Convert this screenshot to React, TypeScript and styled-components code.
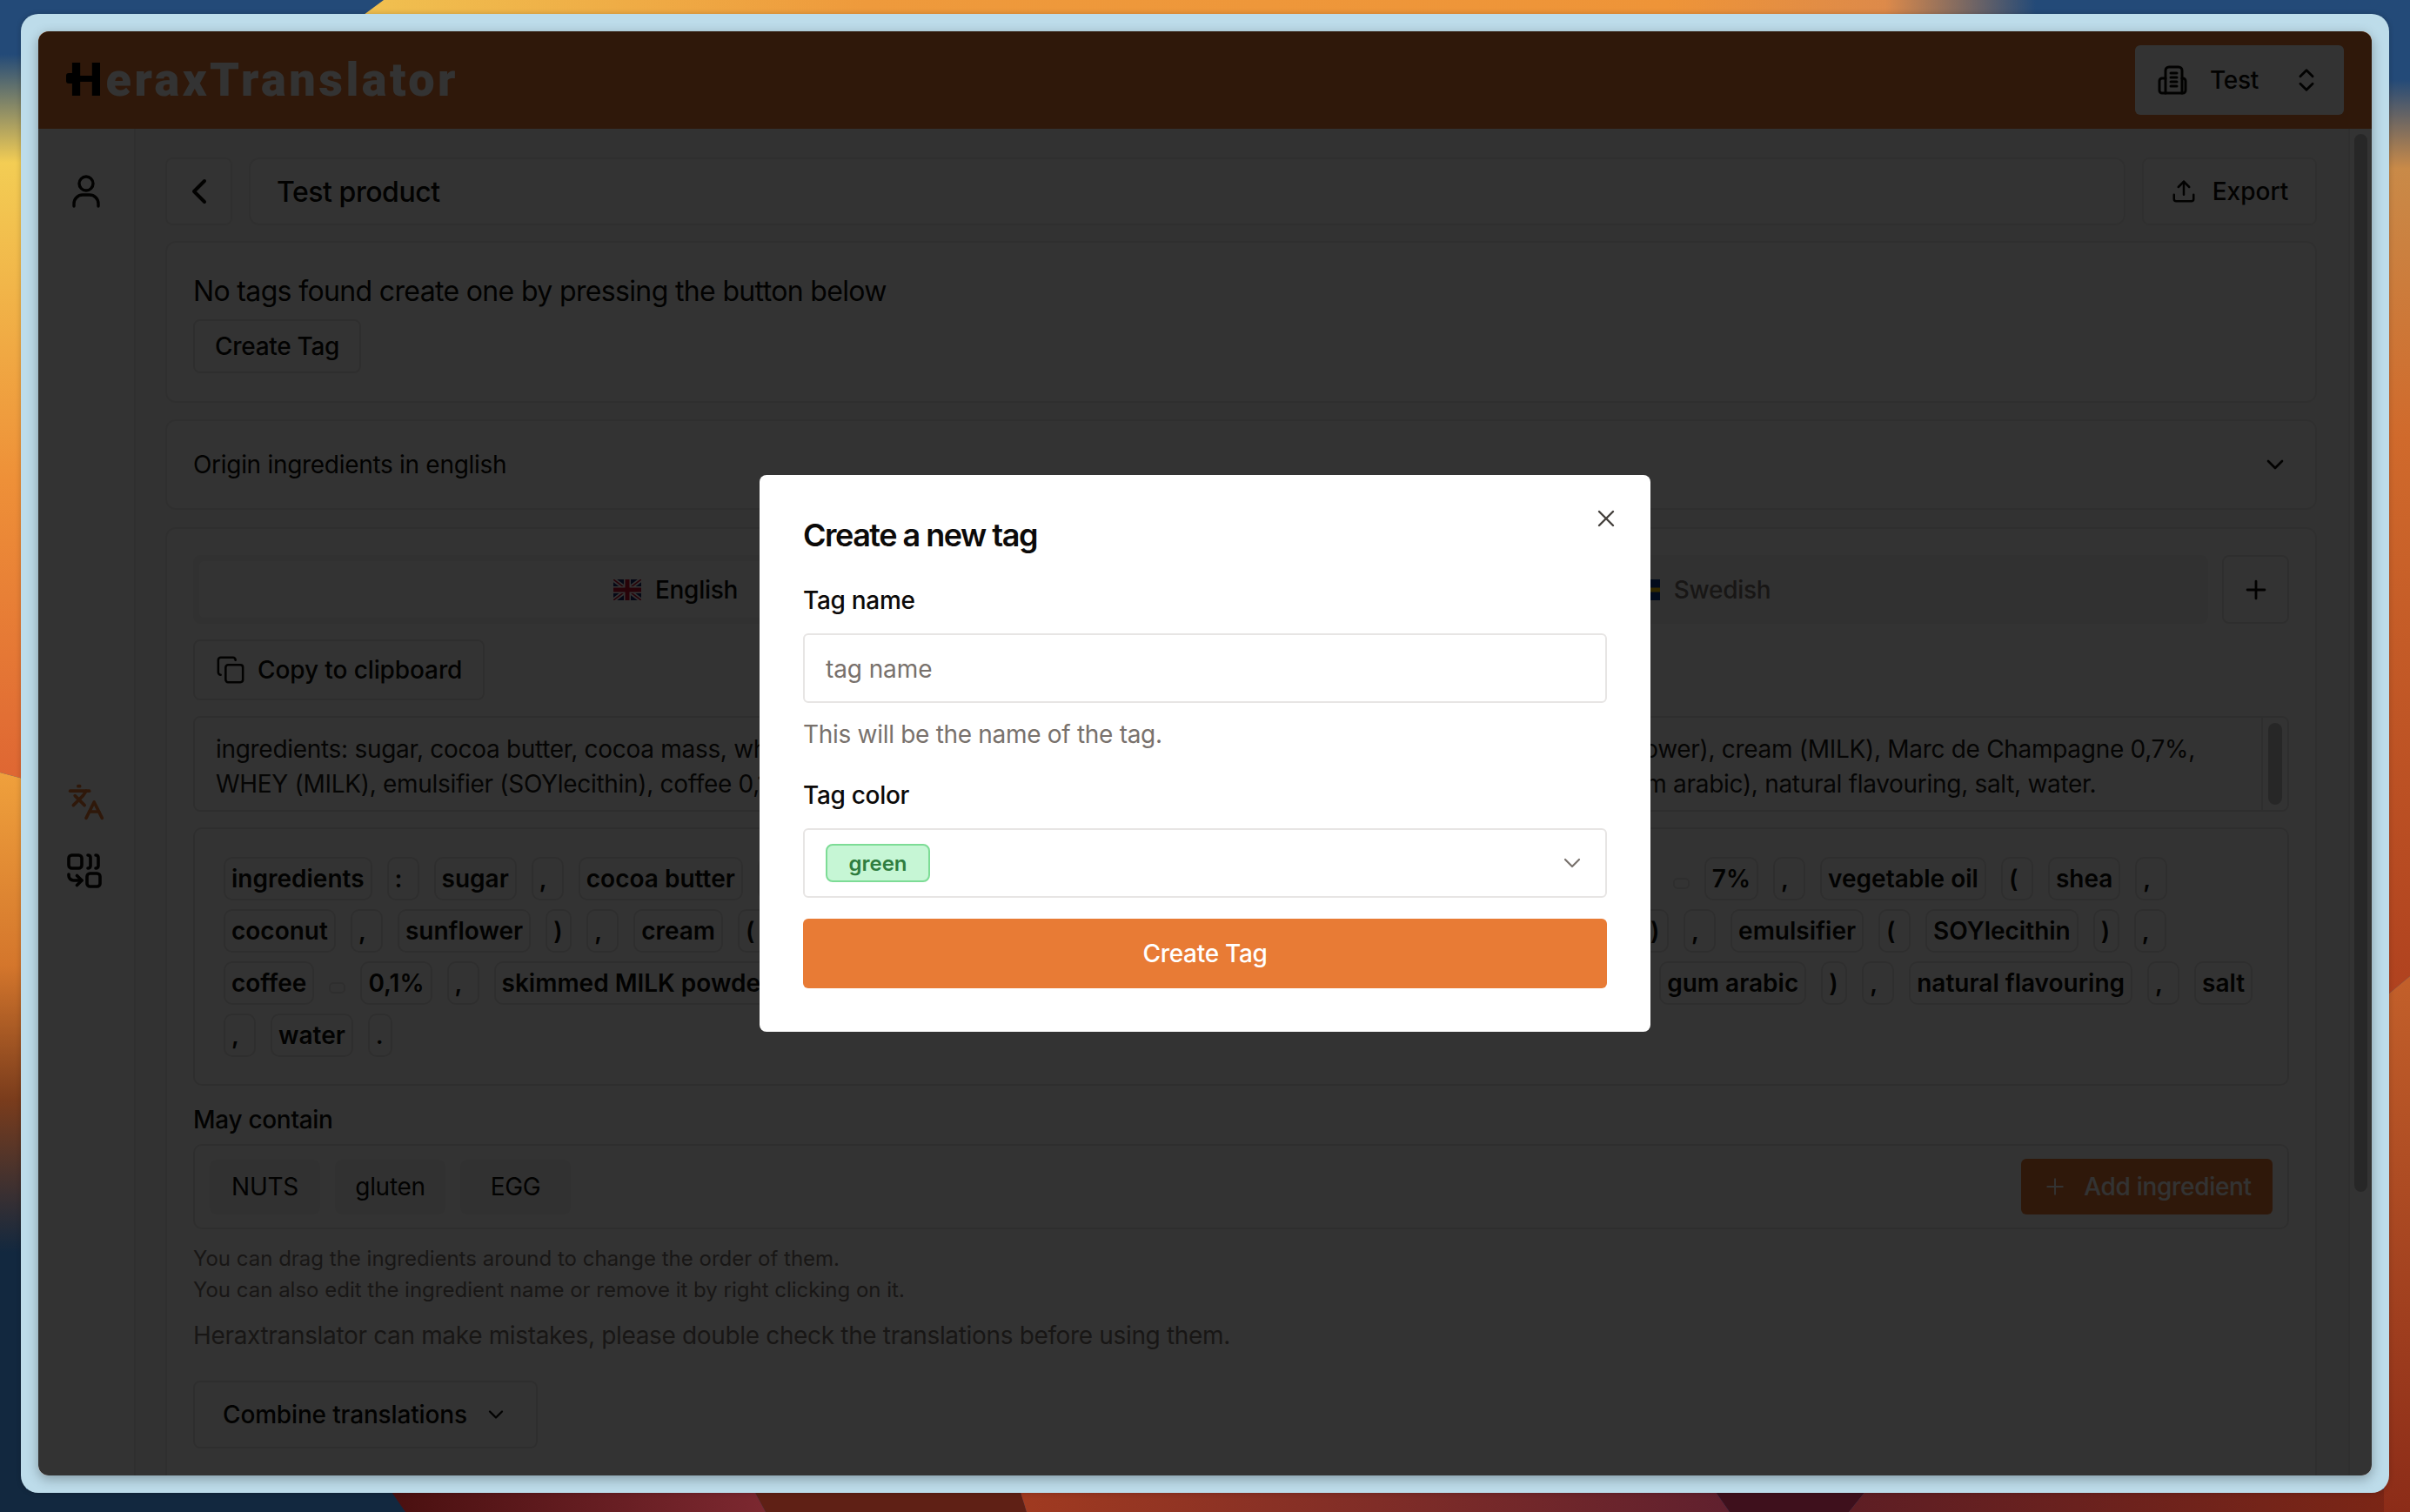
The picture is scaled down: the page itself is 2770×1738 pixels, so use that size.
import React from 'react';
import styled, { createGlobalStyle } from 'styled-components';
import { ChevronDown, ChevronLeft, ChevronsUpDown, Copy, Languages, Plus, Upload, X } from 'lucide-react';

const GlobalStyle = createGlobalStyle`
  html, body {
    margin: 0;
    padding: 0;
    background: #234a78;
  }

  * {
    box-sizing: border-box;
  }

  body {
    font-family: Inter, 'Liberation Sans', sans-serif;
    color: #0c0a09;
    font-size: 28px;
    letter-spacing: -0.3px;
  }
`;

interface TokenData {
  text: string;
  min?: number;
  empty?: boolean;
}

const t = (text: string): TokenData => {
  if (text === ',' || text === ':') return { text, min: 37 };
  if (text === '.') return { text, min: 28 };
  if (text === '(') return { text, min: 37 };
  if (text === ')') return { text, min: 30 };
  if (text === '') return { text, empty: true };
  return { text };
};

const rows: { left: string[]; hidden?: string[]; gap?: number; right?: string[] }[] = [
  {
    left: ['ingredients', ':', 'sugar', ',', 'cocoa butter'],
    hidden: [',', 'cocoa mass', ',', 'whole MILK powder', ',', 'hazelnuts'],
    gap: 1035,
    right: ['', '7%', ',', 'vegetable oil', '(', 'shea', ','],
  },
  {
    left: ['coconut', ',', 'sunflower', ')', ',', 'cream', '('],
    hidden: ['MILK', ')', ',', 'Marc de Champagne', '0,7%', ',', 'WHEY', '(', 'MILK'],
    gap: 969,
    right: [')', ',', 'emulsifier', '(', 'SOYlecithin', ')', ','],
  },
  {
    left: ['coffee', '', '0,1%', ',', 'skimmed MILK powder'],
    hidden: [',', 'glucose syrup', ',', 'thickener', '('],
    gap: 979,
    right: ['gum arabic', ')', ',', 'natural flavouring', ',', 'salt'],
  },
  { left: [',', 'water', '.'] },
];

const Wallpaper = () => (
  <WallpaperSvg viewBox="0 0 2770 1738" aria-hidden="true">
    <defs>
      <linearGradient id="leftTop" gradientUnits="userSpaceOnUse" x1="0" y1="0" x2="0" y2="890">
        <stop offset="0.07" stopColor="#234a78" />
        <stop offset="0.21" stopColor="#f3cd54" />
        <stop offset="0.62" stopColor="#ee9038" />
        <stop offset="1" stopColor="#df6733" />
      </linearGradient>
      <linearGradient id="leftBottom" gradientUnits="userSpaceOnUse" x1="0" y1="890" x2="0" y2="1440">
        <stop offset="0" stopColor="#efa03c" />
        <stop offset="0.4" stopColor="#d4762c" />
        <stop offset="0.68" stopColor="#7a3c1c" />
        <stop offset="1" stopColor="#12283f" />
      </linearGradient>
      <linearGradient id="rightTop" gradientUnits="userSpaceOnUse" x1="0" y1="0" x2="0" y2="1140">
        <stop offset="0.08" stopColor="#234a78" />
        <stop offset="0.17" stopColor="#c98a48" />
        <stop offset="0.44" stopColor="#d06a2c" />
        <stop offset="1" stopColor="#b0421f" />
      </linearGradient>
      <linearGradient id="rightBottom" gradientUnits="userSpaceOnUse" x1="0" y1="1130" x2="0" y2="1738">
        <stop offset="0" stopColor="#c25f2a" />
        <stop offset="1" stopColor="#8c2c18" />
      </linearGradient>
      <linearGradient id="topBand" gradientUnits="userSpaceOnUse" x1="417" y1="0" x2="2340" y2="0">
        <stop offset="0" stopColor="#f0c050" />
        <stop offset="0.3" stopColor="#ee9a3c" />
        <stop offset="0.78" stopColor="#ee9438" />
        <stop offset="0.91" stopColor="#dd8a4a" />
        <stop offset="1" stopColor="#234a78" />
      </linearGradient>
      <linearGradient id="bottomA" gradientUnits="userSpaceOnUse" x1="450" y1="0" x2="880" y2="0">
        <stop offset="0" stopColor="#4a1010" />
        <stop offset="1" stopColor="#7c2830" />
      </linearGradient>
      <linearGradient id="bottomB" gradientUnits="userSpaceOnUse" x1="1175" y1="0" x2="1985" y2="0">
        <stop offset="0" stopColor="#a03a20" />
        <stop offset="1" stopColor="#60202e" />
      </linearGradient>
      <linearGradient id="bottomC" gradientUnits="userSpaceOnUse" x1="2130" y1="0" x2="2770" y2="0">
        <stop offset="0" stopColor="#5e1e24" />
        <stop offset="1" stopColor="#7c2615" />
      </linearGradient>
    </defs>
    <rect x="0" y="0" width="2770" height="20" fill="#234a78" />
    <polygon points="441,0 2340,0 2340,20 414,20" fill="url(#topBand)" />
    <rect x="0" y="1712" width="470" height="26" fill="#12283f" />
    <polygon points="448,1712 866,1712 880,1738 466,1738" fill="url(#bottomA)" />
    <polygon points="866,1712 1172,1712 1180,1738 880,1738" fill="#5f2015" />
    <polygon points="1172,1712 1970,1712 1988,1738 1180,1738" fill="url(#bottomB)" />
    <polygon points="1970,1712 2146,1712 2125,1738 1988,1738" fill="#3e101c" />
    <polygon points="2146,1712 2770,1712 2770,1738 2125,1738" fill="url(#bottomC)" />
    <polygon points="0,0 30,0 30,896 0,888" fill="url(#leftTop)" />
    <polygon points="0,888 30,896 30,1738 0,1738" fill="url(#leftBottom)" />
    <polygon points="2740,0 2770,0 2770,1122 2740,1147" fill="url(#rightTop)" />
    <polygon points="2740,1147 2770,1122 2770,1738 2740,1738" fill="url(#rightBottom)" />
  </WallpaperSvg>
);

const BuildingIcon = () => (
  <svg width="34" height="34" viewBox="0 0 34 34" fill="none" stroke="currentColor" strokeWidth="3" strokeLinecap="round" strokeLinejoin="round">
    <path d="M9 32V6a4 4 0 0 1 4-4h11a4 4 0 0 1 4 4v26" />
    <path d="M9 15H5a3 3 0 0 0-3 3v11a3 3 0 0 0 3 3h24a3 3 0 0 0 3-3V18a3 3 0 0 0-3-3h-1" />
    <path d="M15 9h7M15 14h7M15 19h7M15 24h7" />
  </svg>
);

const PersonIcon = () => (
  <svg width="32" height="38" viewBox="0 0 32 38" fill="none" stroke="currentColor" strokeWidth="3.4" strokeLinecap="round">
    <circle cx="16" cy="10" r="8" />
    <path d="M2 36v-3a10 10 0 0 1 10-10h8a10 10 0 0 1 10 10v3" />
  </svg>
);

const CombineIcon = () => (
  <svg width="40" height="40" viewBox="0 0 40 40" fill="none" stroke="currentColor" strokeWidth="3.6" strokeLinecap="round" strokeLinejoin="round">
    <rect x="2" y="2" width="15" height="15" rx="3.5" />
    <path d="M24 2c1.8 0 3 1.2 3 3v9c0 1.8-1.2 3-3 3" />
    <path d="M33 2c1.8 0 3 1.2 3 3v9c0 1.8-1.2 3-3 3" />
    <path d="M2 24v1.5A5.5 5.5 0 0 0 7.500 31H17" />
    <path d="M11.500 25.500 17 31l-5.500 5.500" />
    <rect x="23" y="23" width="15" height="15" rx="3.5" />
  </svg>
);

const UkFlag = () => (
  <svg width="32" height="24" viewBox="0 0 32 24">
    <rect width="32" height="24" fill="#1a2a6c" />
    <path d="M0 0l32 24M32 0L0 24" stroke="#fff" strokeWidth="5" />
    <path d="M0 0l32 24M32 0L0 24" stroke="#c8102e" strokeWidth="1.6" />
    <path d="M16 0v24M0 12h32" stroke="#fff" strokeWidth="8" />
    <path d="M16 0v24M0 12h32" stroke="#c8102e" strokeWidth="5" />
  </svg>
);

const SeFlag = () => (
  <svg width="32" height="24" viewBox="0 0 32 24">
    <rect width="32" height="24" fill="#0b3a8a" />
    <path d="M11 0v24M0 12h32" stroke="#fecb00" strokeWidth="5" />
  </svg>
);

const TokenChip = ({ token }: { token: TokenData }) => (
  <Token $min={token.min} $empty={token.empty}>
    {token.text}
  </Token>
);

const App: React.FC = () => {
  return (
    <Desktop>
      <GlobalStyle />
      <Wallpaper />
      <Frame>
        <Window>
          <Header>
            <Logo>
              <LogoH>H</LogoH>eraxTranslator
            </Logo>
            <TenantSelect>
              <BuildingIcon />
              <TenantName>Test</TenantName>
              <ChevronsUpDown size={34} strokeWidth={2} />
            </TenantSelect>
          </Header>
          <Body>
            <Sidebar>
              <SideTop>
                <PersonIcon />
              </SideTop>
              <SideBottom>
                <TranslateIcon>
                  <Languages size={44} />
                </TranslateIcon>
                <CombineIcon />
              </SideBottom>
            </Sidebar>
            <Main>
              <TitleRow>
                <BackButton>
                  <ChevronLeft size={48} />
                </BackButton>
                <TitleBox>Test product</TitleBox>
                <ExportButton>
                  <Upload size={30} />
                  Export
                </ExportButton>
              </TitleRow>
              <TagsCard>
                <TagsText>No tags found create one by pressing the button below</TagsText>
                <OutlineButton>Create Tag</OutlineButton>
              </TagsCard>
              <OriginCard>
                Origin ingredients in english
                <ChevronDown size={32} />
              </OriginCard>
              <TranslationCard>
                <TabRow>
                  <TabList>
                    <Tab $active $shift={84}>
                      <UkFlag />
                      English
                    </Tab>
                    <Tab $shift={28}>
                      <SeFlag />
                      Swedish
                    </Tab>
                  </TabList>
                  <PlusButton>
                    <Plus size={34} />
                  </PlusButton>
                </TabRow>
                <CopyButton>
                  <Copy size={34} strokeWidth={1.8} />
                  Copy to clipboard
                </CopyButton>
                <TextBox>
                  <TextLines>
                    ingredients: sugar, cocoa butter, cocoa mass, whole MILK powder, glucose, hazelnut oil 7%, vegetable oil (shea, coconut, sunflower), cream (MILK), Marc de Champagne 0,7%,
                    <br />
                    WHEY (MILK), emulsifier (SOYlecithin), coffee 0,1%, skimmed MILK powder, glucose syrup, invert sugars, stabilising agents (gum arabic), natural flavouring, salt, water.
                  </TextLines>
                  <TextScroll>
                    <TextThumb />
                  </TextScroll>
                </TextBox>
                <TokenBox>
                  {rows.map((row, i) => (
                    <TokenRow key={i}>
                      {row.left.map((text, j) => (
                        <TokenChip key={j} token={t(text)} />
                      ))}
                      {row.hidden && (
                        <HiddenRun $width={row.gap || 0}>
                          {row.hidden.map((text, j) => (
                            <TokenChip key={j} token={t(text)} />
                          ))}
                        </HiddenRun>
                      )}
                      {row.right &&
                        row.right.map((text, j) => <TokenChip key={j} token={t(text)} />)}
                    </TokenRow>
                  ))}
                </TokenBox>
                <SectionLabel>May contain</SectionLabel>
                <MayContainBox>
                  <AllergenList>
                    <Allergen>NUTS</Allergen>
                    <Allergen>gluten</Allergen>
                    <Allergen>EGG</Allergen>
                  </AllergenList>
                  <AddButton>
                    <Plus size={30} strokeWidth={1.5} />
                    Add ingredient
                  </AddButton>
                </MayContainBox>
                <HelpText>
                  You can drag the ingredients around to change the order of them.
                  <br />
                  You can also edit the ingredient name or remove it by right clicking on it.
                </HelpText>
                <Warning>Heraxtranslator can make mistakes, please double check the translations before using them.</Warning>
                <CombineButton>
                  Combine translations
                  <ChevronDown size={28} />
                </CombineButton>
              </TranslationCard>
            </Main>
            <ScrollTrack>
              <ScrollThumb />
            </ScrollTrack>
          </Body>
          <Overlay>
            <Modal>
              <CloseButton>
                <X size={32} strokeWidth={1.8} />
              </CloseButton>
              <ModalTitle>Create a new tag</ModalTitle>
              <FieldLabel $top={43}>Tag name</FieldLabel>
              <TagInput placeholder="tag name" readOnly />
              <FieldHint>This will be the name of the tag.</FieldHint>
              <FieldLabel $top={36}>Tag color</FieldLabel>
              <ColorSelect>
                <GreenBadge>green</GreenBadge>
                <ChevronDown size={32} strokeWidth={1.6} />
              </ColorSelect>
              <SubmitButton>Create Tag</SubmitButton>
            </Modal>
          </Overlay>
        </Window>
      </Frame>
    </Desktop>
  );
};

export default App;

const Desktop = styled.div`
  position: relative;
  width: 2770px;
  height: 1738px;
  padding: 16px 24px 22px 24px;
  display: flex;
  overflow: hidden;
`;

const WallpaperSvg = styled.svg`
  position: absolute;
  inset: 0;
  width: 100%;
  height: 100%;
`;

const Frame = styled.div`
  position: relative;
  flex: 1;
  display: flex;
  padding: 20px;
  background: #bddcea;
  border-radius: 20px;
  box-shadow: 0 0 6px rgba(0, 0, 0, 0.2);
`;

const Window = styled.div`
  position: relative;
  flex: 1;
  display: flex;
  flex-direction: column;
  overflow: hidden;
  background: #fff;
  border-radius: 12px;
  box-shadow: 0 4px 14px rgba(0, 0, 0, 0.3);
`;

const Header = styled.header`
  flex: none;
  height: 112px;
  padding: 0 32px;
  display: flex;
  align-items: center;
  justify-content: space-between;
  background: #e87b35;
`;

const Logo = styled.div`
  margin-left: 4px;
  font-family: Roboto, Inter, sans-serif;
  font-weight: 900;
  font-size: 54px;
  letter-spacing: 3.5px;
  line-height: 1;
  color: #fff;
`;

const LogoH = styled.span`
  position: relative;
  color: #000;

  &::before {
    content: '';
    position: absolute;
    left: -4px;
    top: 24px;
    width: 10px;
    height: 12px;
    border-radius: 3px;
    background: #000;
  }
`;

const TenantSelect = styled.div`
  width: 240px;
  height: 80px;
  padding: 0 26px;
  display: flex;
  align-items: center;
  justify-content: space-between;
  background: #fff;
  border-radius: 6px;
`;

const TenantName = styled.span`
  font-weight: 500;
  flex: 1;
  padding-left: 26px;
`;

const Body = styled.div`
  flex: 1;
  display: flex;
  min-height: 0;
  background: #fafaf9;
`;

const Sidebar = styled.aside`
  flex: none;
  width: 112px;
  display: flex;
  flex-direction: column;
  align-items: center;
  background: #fff;
  border-right: 2px solid #ebeae9;
`;

const SideTop = styled.div`
  margin-top: 53px;
  display: flex;
`;

const SideBottom = styled.div`
  margin-top: 661px;
  display: flex;
  flex-direction: column;
  gap: 37px;
`;

const TranslateIcon = styled.div`
  display: flex;
  color: #e87b35;
`;

const Main = styled.main`
  flex: 1;
  min-width: 0;
  padding: 33px 36px 0 34px;
  display: flex;
  flex-direction: column;
  gap: 18px;
  overflow: hidden;
`;

const TitleRow = styled.div`
  flex: none;
  display: flex;
  gap: 19px;
  height: 78px;
`;

const Panel = styled.div`
  background: #fff;
  border: 2px solid #ebeae9;
  border-radius: 12px;
`;

const BackButton = styled(Panel)`
  width: 77px;
  display: flex;
  align-items: center;
  justify-content: center;
  border-radius: 8px;
`;

const TitleBox = styled(Panel)`
  flex: 1;
  display: flex;
  align-items: center;
  padding-left: 30px;
  font-size: 32px;
  letter-spacing: -0.45px;
  font-weight: 500;
`;

const ExportButton = styled(Panel)`
  width: 201px;
  display: flex;
  align-items: center;
  justify-content: center;
  gap: 18px;
  font-weight: 500;
  letter-spacing: 0;
  border-radius: 8px;
`;

const TagsCard = styled(Panel)`
  flex: none;
  height: 186px;
  padding: 32px 32px 32px 30px;
  display: flex;
  flex-direction: column;
  align-items: flex-start;
  gap: 8px;
`;

const TagsText = styled.div`
  font-size: 32px;
  line-height: 48px;
  letter-spacing: -0.65px;
`;

const OutlineButton = styled.div`
  height: 62px;
  padding: 0 23px;
  display: flex;
  align-items: center;
  font-weight: 500;
  border: 2px solid #e7e5e4;
  border-radius: 8px;
`;

const OriginCard = styled(Panel)`
  flex: none;
  height: 104px;
  padding: 0 30px;
  display: flex;
  align-items: center;
  justify-content: space-between;
  margin-top: 1px;
`;

const TranslationCard = styled(Panel)`
  flex: none;
  margin-top: 2px;
  padding: 30px 30px 40px;
  display: flex;
  flex-direction: column;
  align-items: stretch;
`;

const TabRow = styled.div`
  display: flex;
  gap: 16px;
  height: 79px;
`;

const TabList = styled.div`
  flex: 1;
  display: flex;
  padding: 7px;
  background: #f5f5f4;
  border-radius: 8px;
`;

const Tab = styled.div<{ $active?: boolean; $shift?: number }>`
  flex: 1;
  display: flex;
  align-items: center;
  justify-content: center;
  gap: 16px;
  padding-right: ${(p) => p.$shift || 0}px;
  font-weight: 500;
  border-radius: 6px;
  background: ${(p) => (p.$active ? '#fff' : 'transparent')};
  color: ${(p) => (p.$active ? '#0c0a09' : '#78716c')};
`;

const PlusButton = styled.div`
  width: 77px;
  display: flex;
  align-items: center;
  justify-content: center;
  border: 2px solid #e7e5e4;
  border-radius: 8px;
`;

const CopyButton = styled.div`
  align-self: flex-start;
  height: 70px;
  margin-top: 18px;
  padding: 0 24px;
  display: flex;
  align-items: center;
  gap: 14px;
  font-weight: 500;
  letter-spacing: -0.1px;
  border: 2px solid #e7e5e4;
  border-radius: 8px;
`;

const TextBox = styled.div`
  margin-top: 18px;
  height: 110px;
  display: flex;
  border: 2px solid #e7e5e4;
  border-radius: 8px;
`;

const TextLines = styled.div`
  flex: 1;
  padding: 16px 24px;
  font-size: 28px;
  line-height: 40px;
  white-space: nowrap;
  overflow: hidden;
  color: #1c1917;
`;

const TextScroll = styled.div`
  flex: none;
  width: 30px;
  padding: 6px 6px;
  border-left: 2px solid #e7e5e4;
`;

const TextThumb = styled.div`
  height: 100%;
  border-radius: 8px;
  background: #c4c4c4;
`;

const TokenBox = styled.div`
  margin-top: 18px;
  padding: 32px 33px 31px;
  display: flex;
  flex-direction: column;
  gap: 10px;
  border: 2px solid #e7e5e4;
  border-radius: 10px;
`;

const TokenRow = styled.div`
  display: flex;
  gap: 17px;
  height: 50px;
`;

const Token = styled.div<{ $min?: number; $empty?: boolean }>`
  flex: none;
  height: ${(p) => (p.$empty ? '13px' : '50px')};
  width: ${(p) => (p.$empty ? '19px' : 'auto')};
  min-width: ${(p) => p.$min || 0}px;
  margin-top: ${(p) => (p.$empty ? '24px' : '0')};
  padding: 0 7px;
  display: flex;
  align-items: center;
  font-weight: 600;
  letter-spacing: 0;
  white-space: nowrap;
  border: 2px solid #e7e5e4;
  border-radius: ${(p) => (p.$empty ? '5px' : '10px')};
`;

const HiddenRun = styled.div<{ $width: number }>`
  flex: none;
  width: ${(p) => p.$width}px;
  display: flex;
  gap: 17px;
  overflow: hidden;
`;

const SectionLabel = styled.div`
  margin-top: 25px;
  font-weight: 500;
  line-height: 28px;
`;

const MayContainBox = styled.div`
  margin-top: 14px;
  height: 98px;
  padding: 0 17px;
  display: flex;
  align-items: center;
  justify-content: space-between;
  border: 2px solid #e7e5e4;
  border-radius: 10px;
`;

const AllergenList = styled.div`
  display: flex;
  gap: 17px;
`;

const Allergen = styled.div`
  width: 127px;
  height: 63px;
  display: flex;
  align-items: center;
  justify-content: center;
  background: #f5f5f4;
  border-radius: 8px;
`;

const AddButton = styled.div`
  width: 289px;
  height: 64px;
  display: flex;
  align-items: center;
  justify-content: center;
  gap: 18px;
  font-weight: 500;
  color: #fff;
  background: #e87b35;
  border-radius: 6px;
`;

const HelpText = styled.div`
  margin-top: 16px;
  font-size: 24px;
  line-height: 36px;
  letter-spacing: 0;
  color: #78716c;
`;

const Warning = styled.div`
  margin-top: 14px;
  line-height: 40px;
  letter-spacing: -0.34px;
  color: #78716c;
`;

const CombineButton = styled.div`
  align-self: flex-start;
  width: 396px;
  height: 78px;
  margin-top: 32px;
  padding: 0 32px;
  display: flex;
  align-items: center;
  justify-content: space-between;
  font-weight: 500;
  letter-spacing: -0.15px;
  border: 2px solid #e7e5e4;
  border-radius: 8px;
`;

const ScrollTrack = styled.div`
  flex: none;
  width: 27px;
  padding: 6px 5px 0;
  background: #fff;
  border-left: 2px solid #ebeae9;
`;

const ScrollThumb = styled.div`
  height: 1216px;
  border-radius: 8px;
  background: #c4c4c4;
`;

const Overlay = styled.div`
  position: absolute;
  inset: 0;
  display: flex;
  align-items: center;
  justify-content: center;
  background: rgba(0, 0, 0, 0.8);
`;

const Modal = styled.div`
  position: relative;
  width: 1024px;
  height: 640px;
  padding: 51px 50px 0;
  display: flex;
  flex-direction: column;
  background: #fff;
  border-radius: 8px;
`;

const CloseButton = styled.div`
  position: absolute;
  top: 34px;
  right: 35px;
  display: flex;
  color: #44403c;
`;

const ModalTitle = styled.h2`
  margin: 0;
  font-size: 36px;
  line-height: 36px;
  font-weight: 600;
  letter-spacing: -1.5px;
`;

const FieldLabel = styled.label<{ $top: number }>`
  margin-top: ${(p) => p.$top}px;
  font-weight: 500;
  line-height: 28px;
`;

const TagInput = styled.input`
  margin-top: 24px;
  height: 80px;
  padding: 2px 24px 0;
  font: inherit;
  letter-spacing: -0.1px;
  border: 2px solid #e7e5e4;
  border-radius: 6px;
  outline: none;

  &::placeholder {
    color: #78716c;
  }
`;

const FieldHint = styled.div`
  margin-top: 16px;
  line-height: 40px;
  color: #78716c;
`;

const ColorSelect = styled.div`
  margin-top: 24px;
  height: 80px;
  padding: 0 22px 0 24px;
  display: flex;
  align-items: center;
  justify-content: space-between;
  border: 2px solid #e7e5e4;
  border-radius: 6px;

  svg {
    color: #78716c;
  }
`;

const GreenBadge = styled.span`
  width: 120px;
  height: 44px;
  display: flex;
  align-items: center;
  justify-content: center;
  font-size: 24px;
  font-weight: 600;
  letter-spacing: 0;
  color: #2f7d3f;
  background: #c6f6d5;
  border: 2px solid #7ddc96;
  border-radius: 8px;
`;

const SubmitButton = styled.div`
  margin-top: 24px;
  height: 80px;
  display: flex;
  align-items: center;
  justify-content: center;
  font-weight: 500;
  color: #fff;
  background: #e87b35;
  border-radius: 6px;
`;
